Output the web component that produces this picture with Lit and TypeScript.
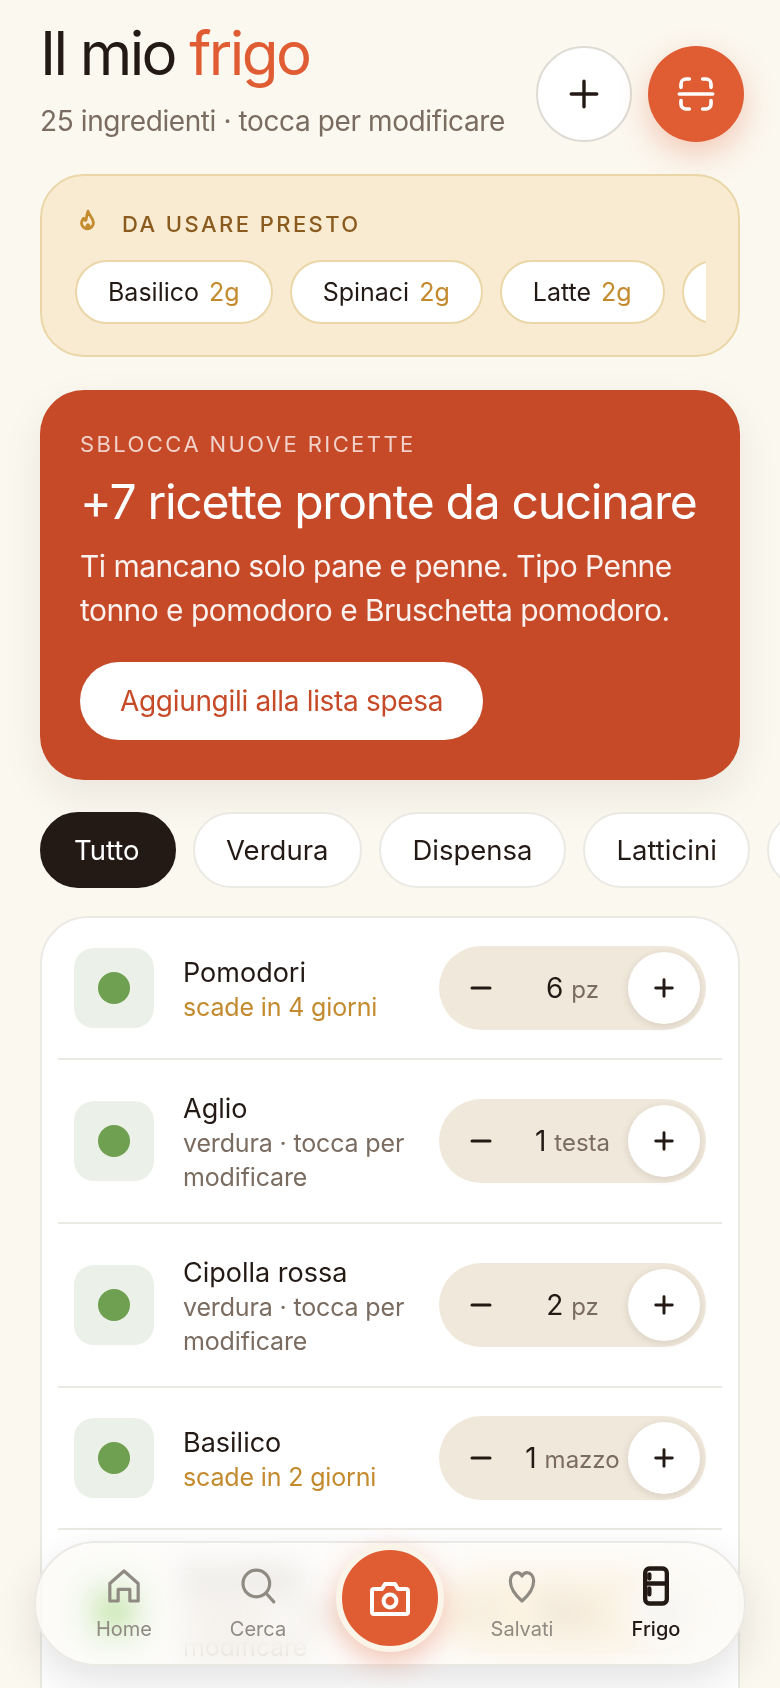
import { LitElement, html, css, svg } from 'lit';
import { customElement } from 'lit/decorators.js';

type Item = { name: string; meta: string; soon?: boolean; qty: number; unit: string };

const expiring = ['Basilico', 'Spinaci', 'Latte', 'Uova'];
const filters = ['Tutto', 'Verdura', 'Dispensa', 'Latticini', 'Carne'];
const items: Item[] = [
  { name: 'Pomodori', meta: 'scade in 4 giorni', soon: true, qty: 6, unit: 'pz' },
  { name: 'Aglio', meta: 'verdura · tocca per modificare', qty: 1, unit: 'testa' },
  { name: 'Cipolla rossa', meta: 'verdura · tocca per modificare', qty: 2, unit: 'pz' },
  { name: 'Basilico', meta: 'scade in 2 giorni', soon: true, qty: 1, unit: 'mazzo' },
  { name: 'Zucchine', meta: 'verdura · tocca per modificare', qty: 3, unit: 'pz' },
  { name: 'Carote', meta: 'verdura · tocca per modificare', qty: 4, unit: 'pz' },
];

const icon = (size: number, width: number, body: unknown) => html`<svg
  width=${size}
  height=${size}
  viewBox="0 0 24 24"
  fill="none"
  stroke="currentColor"
  stroke-width=${width}
  stroke-linecap="round"
  stroke-linejoin="round"
>${body}</svg>`;

const plusPath = svg`<path d="M12 3v18M3 12h18" />`;
const minusPath = svg`<path d="M3 12h18" />`;

@customElement('app-root')
export class AppRoot extends LitElement {
  static styles = css`
    :host {
      display: block;
      position: relative;
      height: 1688px;
      overflow: hidden;
      background: #fbf8f0;
      color: #241a15;
      font-family: Inter, 'Liberation Sans', sans-serif;
    }

    .page {
      display: flex;
      flex-direction: column;
      padding: 0 40px;
    }

    /* header */
    .header {
      display: flex;
      align-items: flex-start;
      height: 174px;
      margin-right: -4px;
    }
    .heading {
      flex: none;
      width: 496px;
      padding-top: 17px;
    }
    h1 {
      margin: 0;
      font-size: 60px;
      line-height: 72px;
      font-weight: 400;
      letter-spacing: -2.6px;
    }
    h1 span { color: #e05c33; }
    .sub {
      margin-top: 14px;
      font-size: 28px;
      line-height: 36px;
      letter-spacing: -0.4px;
      color: #7a6c60;
      white-space: nowrap;
    }
    .actions {
      display: flex;
      gap: 16px;
      padding-top: 46px;
    }
    .round {
      width: 96px;
      height: 96px;
      border-radius: 50%;
      box-sizing: border-box;
      display: flex;
      align-items: center;
      justify-content: center;
    }
    .round.add {
      background: #fff;
      border: 2px solid #dedbd5;
      color: #241a15;
    }
    .round.scan {
      background: #e05c33;
      color: #fff;
      box-shadow: 0 12px 32px rgba(224, 92, 51, 0.3);
    }

    /* expiring */
    .soon {
      height: 183px;
      box-sizing: border-box;
      background: #f8ebd2;
      border: 2px solid #ebd6a8;
      border-radius: 44px;
      padding: 30px 32px 0 33px;
    }
    .soon-head {
      display: flex;
      align-items: center;
      gap: 21px;
      height: 36px;
      color: #8a5a1e;
      font-size: 22px;
      font-weight: 500;
      letter-spacing: 0.11em;
    }
    .soon-head svg { color: #c48a2e; margin-top: -4px; }
    .chips {
      display: flex;
      gap: 17px;
      margin-top: 18px;
      overflow: hidden;
    }
    .chip {
      flex: none;
      display: flex;
      align-items: center;
      gap: 10px;
      height: 64px;
      box-sizing: border-box;
      padding: 0 31px;
      background: #fff;
      border: 2px solid #ebd6a8;
      border-radius: 32px;
      font-size: 25px;
      font-weight: 400;
    }
    .chip b {
      font-weight: 400;
      color: #c48a2e;
    }

    /* hero */
    .hero {
      margin-top: 33px;
      height: 390px;
      box-sizing: border-box;
      padding: 40px;
      background: #c64a28;
      border-radius: 44px;
      color: #fff;
      box-shadow: 0 16px 40px rgba(36, 26, 21, 0.08);
    }
    .eyebrow {
      font-size: 22px;
      line-height: 28px;
      letter-spacing: 0.11em;
      color: rgba(255, 255, 255, 0.75);
    }
    .hero h2 {
      margin: 14px 0 0;
      font-size: 48px;
      line-height: 60px;
      font-weight: 400;
      letter-spacing: -1.3px;
      white-space: nowrap;
    }
    .hero p {
      margin: 12px 0 0;
      font-size: 30px;
      line-height: 44px;
      letter-spacing: -0.55px;
      color: rgba(255, 255, 255, 0.92);
    }
    .cta {
      display: inline-flex;
      align-items: center;
      height: 78px;
      margin-top: 30px;
      padding: 0 40px;
      background: #fff;
      color: #c64a28;
      border-radius: 39px;
      font-size: 28px;
      letter-spacing: -0.32px;
      font-weight: 400;
    }

    /* filters */
    .filters {
      display: flex;
      gap: 17px;
      margin-top: 32px;
      margin-right: -40px;
      overflow: hidden;
    }
    .filter {
      flex: none;
      display: flex;
      align-items: center;
      height: 76px;
      box-sizing: border-box;
      padding: 0 31.5px;
      background: #fff;
      border: 2px solid #ebe9e4;
      border-radius: 38px;
      font-size: 27.5px;
      font-weight: 400;
    }
    .filter.on {
      padding: 0 34px 0 32px;
      background: #241a15;
      border-color: #241a15;
      color: #fff;
    }

    /* list */
    .list {
      margin-top: 28px;
      padding: 0 16px;
      background: #fff;
      border: 2px solid #ebe9e4;
      border-radius: 48px;
    }
    .row {
      display: flex;
      align-items: center;
      gap: 29px;
      padding: 28px 16px;
      border-bottom: 2px solid #ebe9e4;
    }
    .tile {
      flex: none;
      width: 80px;
      height: 80px;
      border-radius: 20px;
      background: #ebf0e8;
      display: flex;
      align-items: center;
      justify-content: center;
    }
    .tile i {
      width: 32px;
      height: 32px;
      border-radius: 50%;
      background: #6f9f50;
    }
    .info {
      flex: 1;
      min-width: 0;
      margin-right: -13px;
      padding-top: 3px;
    }
    .name {
      font-size: 27px;
      line-height: 36px;
      font-weight: 400;
    }
    .meta {
      margin-top: -1px;
      font-size: 25px;
      line-height: 34px;
      letter-spacing: -0.15px;
      color: #7a6c60;
    }
    .meta.soon-text { color: #c48a2e; }
    .stepper {
      flex: none;
      display: flex;
      align-items: center;
      width: 267px;
      height: 84px;
      box-sizing: border-box;
      padding: 0 6px;
      background: #f0e8da;
      border-radius: 42px;
    }
    .step {
      flex: none;
      width: 72px;
      height: 72px;
      border-radius: 50%;
      display: flex;
      align-items: center;
      justify-content: center;
    }
    .step.inc {
      background: #fff;
      box-shadow: 0 2px 8px rgba(36, 26, 21, 0.12);
    }
    .qty {
      flex: 1;
      text-align: center;
      font-size: 28px;
      font-weight: 400;
      white-space: nowrap;
    }
    .qty small {
      font-size: 24px;
      font-weight: 400;
      color: #7a6c60;
    }

    /* bottom nav, floats over the list */
    .nav {
      position: absolute;
      left: 34px;
      right: 34px;
      top: 1541px;
      height: 125px;
      box-sizing: border-box;
      display: grid;
      grid-template-columns: 134px 134px 1fr 134px 134px;
      padding: 0 21px;
      background: rgba(252, 250, 246, 0.6);
      border: 2px solid #ebe9e4;
      border-radius: 63px;
      backdrop-filter: blur(15px) saturate(2.4);
      box-shadow: 0 16px 40px rgba(36, 26, 21, 0.12);
    }
    .tab {
      display: flex;
      flex-direction: column;
      align-items: center;
      padding-top: 23px;
      color: #8f8a82;
      font-size: 20px;
      line-height: 28px;
      font-weight: 400;
    }
    .tab svg { margin-bottom: 9px; }
    .tab.on { color: #241a15; font-weight: 500; }
    .shutter {
      justify-self: center;
      margin-top: 1px;
      width: 108px;
      height: 108px;
      box-sizing: border-box;
      border: 6px solid #fbf4e8;
      border-radius: 50%;
      background: #e05c33;
      color: #fff;
      display: flex;
      align-items: center;
      justify-content: center;
      box-shadow: 0 10px 28px rgba(224, 92, 51, 0.35);
    }
  `;

  private renderRow(item: Item) {
    return html`
      <div class="row">
        <div class="tile"><i></i></div>
        <div class="info">
          <div class="name">${item.name}</div>
          <div class="meta ${item.soon ? 'soon-text' : ''}">${item.meta}</div>
        </div>
        <div class="stepper">
          <div class="step">${icon(24, 3, minusPath)}</div>
          <div class="qty">${item.qty} <small>${item.unit}</small></div>
          <div class="step inc">${icon(22, 3.2, plusPath)}</div>
        </div>
      </div>
    `;
  }

  render() {
    return html`
      <div class="page">
        <header class="header">
          <div class="heading">
            <h1>Il mio <span>frigo</span></h1>
            <div class="sub">25 ingredienti · tocca per modificare</div>
          </div>
          <div class="actions">
            <div class="round add">${icon(34, 2.4, plusPath)}</div>
            <div class="round scan">
              ${icon(40, 2.2, svg`
                <path d="M3 8V6a3 3 0 0 1 3-3h2M16 3h2a3 3 0 0 1 3 3v2M21 16v2a3 3 0 0 1-3 3h-2M8 21H6a3 3 0 0 1-3-3v-2" />
                <path d="M2 12h20" />
              `)}
            </div>
          </div>
        </header>

        <section class="soon">
          <div class="soon-head">
            ${icon(26, 2.6, svg`
              <path d="M12 2c.5 3 4.5 6 5 10.500a5.500 5.500 0 0 1-11 .5c0-2 1-3.500 2-4.500.5 1.500 1.300 2 2 2 .8-2.500.8-5.500 2-8.500z" />
              <path d="M12 14.500c.8.6 1.200 1.200 1.200 1.800a1.200 1.200 0 0 1-2.400 0c0-.6.4-1.200 1.200-1.800z" />
            `)}
            <span>DA USARE PRESTO</span>
          </div>
          <div class="chips">
            ${expiring.map((name) => html`<div class="chip">${name} <b>2g</b></div>`)}
          </div>
        </section>

        <section class="hero">
          <div class="eyebrow">SBLOCCA NUOVE RICETTE</div>
          <h2>+7 ricette pronte da cucinare</h2>
          <p>Ti mancano solo pane e penne. Tipo Penne tonno e pomodoro e Bruschetta pomodoro.</p>
          <div class="cta">Aggiungili alla lista spesa</div>
        </section>

        <div class="filters">
          ${filters.map((f, i) => html`<div class="filter ${i === 0 ? 'on' : ''}">${f}</div>`)}
        </div>

        <div class="list">${items.map((item) => this.renderRow(item))}</div>
      </div>

      <nav class="nav">
        <div class="tab">
          ${icon(40, 1.9, svg`
            <path d="M3.500 21V10.500L12 3l8.500 7.500V21h-5v-7h-7v7z" />
          `)}
          Home
        </div>
        <div class="tab">
          ${icon(40, 1.9, svg`
            <circle cx="11" cy="10.500" r="8" />
            <path d="M17 16.500l4.500 5" />
          `)}
          Cerca
        </div>
        <div class="shutter">
          ${icon(48, 2, svg`
            <path d="M3 8.500a1 1 0 0 1 1-1h4L9.500 5h5L16 7.500h4a1 1 0 0 1 1 1V19a1 1 0 0 1-1 1H4a1 1 0 0 1-1-1z" />
            <circle cx="12" cy="13.500" r="3.200" />
          `)}
        </div>
        <div class="tab">
          ${icon(40, 1.900, svg`
            <path d="M12 21c-4-3.500-7-7.500-7-12C5 6 6.800 4 9 4c1.300 0 2.300.7 3 2 .7-1.300 1.700-2 3-2 2.200 0 4 2 4 5 0 4.500-3 8.500-7 12z" />
          `)}
          Salvati
        </div>
        <div class="tab on">
          ${icon(40, 2.600, svg`
            <rect x="5.500" y="1.500" width="13" height="21" rx="2.500" />
            <path d="M5.500 10.500h13M8 5v2.500M8 13.500v3.500" />
          `)}
          Frigo
        </div>
      </nav>
    `;
  }
}
